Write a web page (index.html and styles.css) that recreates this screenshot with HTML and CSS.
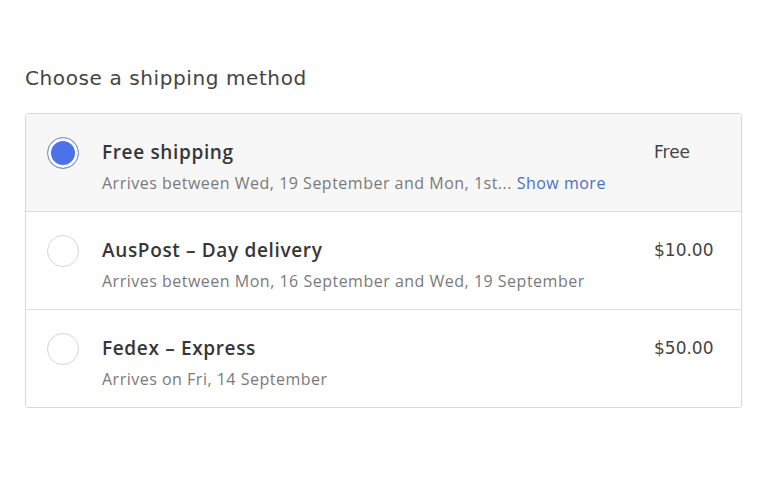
FILE: index.html
```html
<!DOCTYPE html>
<html>
<head>
    <meta charset="UTF-8">
    <title>Choose a shipping method</title>
    <link rel="stylesheet" href="styles.css">
</head>
<body>

<h2 class="titulo">Choose a shipping method</h2>

<div class="metodos">
    <div class="metodo ativo">
        <span class="radio marcado"></span>
        <div class="info">
            <div class="nome">Free shipping</div>
            <div class="prazo">Arrives between Wed, 19 September and Mon, 1st... <a href="#" class="mais">Show more</a></div>
        </div>
        <div class="preco">Free</div>
    </div>
    <div class="metodo">
        <span class="radio"></span>
        <div class="info">
            <div class="nome">AusPost &ndash; Day delivery</div>
            <div class="prazo">Arrives between Mon, 16 September and Wed, 19 September</div>
        </div>
        <div class="preco">$10.00</div>
    </div>
    <div class="metodo">
        <span class="radio"></span>
        <div class="info">
            <div class="nome">Fedex &ndash; Express</div>
            <div class="prazo">Arrives on Fri, 14 September</div>
        </div>
        <div class="preco">$50.00</div>
    </div>
</div>

</body>
</html>
```

FILE: styles.css
```css
body {
    margin: 0;
    padding: 0 18px 0 25px;
    background-color: #ffffff;
    font-family: "Open Sans", Arial, sans-serif;
    color: #333;
}

.titulo {
    margin: 0;
    padding-top: 65px;
    font-family: "DejaVu Sans", sans-serif;
    font-weight: normal;
    font-size: 20px;
    line-height: 26px;
    color: #444;
    letter-spacing: 0.6px;
}

.metodos {
    margin-top: 22px;
    border: 1px solid #d9d9d9;
    border-radius: 3px;
    overflow: hidden;
}

.metodo {
    display: flex;
    align-items: flex-start;
    height: 98px;
    box-sizing: border-box;
    padding: 22px 0 0 21px;
    border-top: 1px solid #dcdcdc;
    background-color: #ffffff;
}

.metodo:first-child {
    border-top: none;
    height: 97px;
}

.metodo.ativo {
    background-color: #f7f7f8;
}

.radio {
    flex: none;
    width: 30px;
    height: 30px;
    margin-top: 1px;
    border: 1px solid #d6d6d6;
    border-radius: 50%;
    background-color: #fff;
    box-sizing: content-box;
}

.radio.marcado {
    border-color: #7d96e6;
    background-color: #4c72ea;
    box-shadow: inset 0 0 0 3px #fff;
}

.info {
    flex: 1;
    margin-left: 23px;
}

.nome {
    font-weight: 600;
    font-size: 19px;
    line-height: 32px;
    color: #363636;
    letter-spacing: 0.65px;
}

.prazo {
    margin-top: 5px;
    font-size: 16px;
    line-height: 20px;
    color: #7a7a7a;
    letter-spacing: 0.5px;
}

.mais {
    color: #4a6fc9;
    text-decoration: none;
}

.preco {
    flex: none;
    width: 87px;
    font-family: "DejaVu Sans", sans-serif;
    font-size: 17px;
    line-height: 32px;
    color: #444;
}
```
